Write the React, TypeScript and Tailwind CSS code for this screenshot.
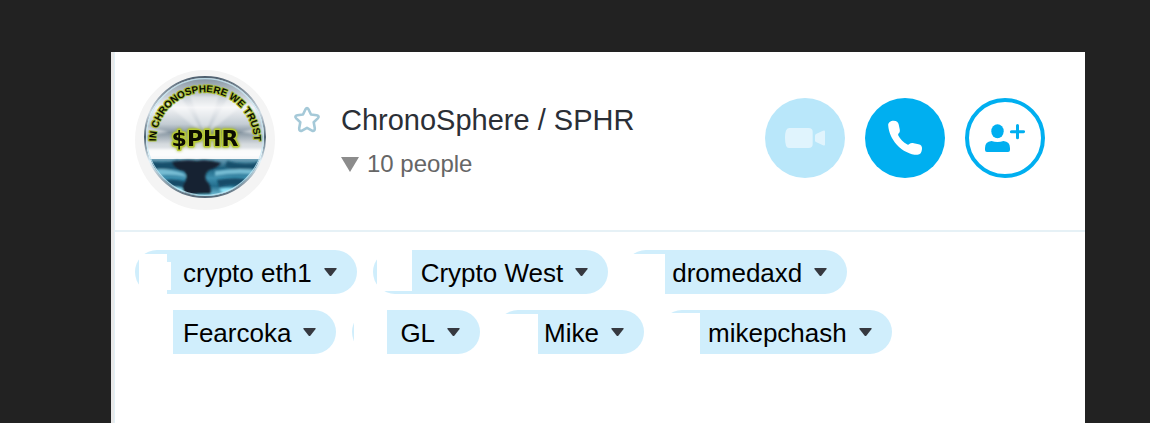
import { clsx } from 'clsx';

type Person = { name: string; masks: string[] };

// The masks blank out the profile picture at the left end of each chip
const people: Person[] = [
  { name: 'crypto eth1', masks: ['left-1 top-1 -bottom-px w-7', 'left-8 top-3 bottom-1 w-1'] },
  { name: 'Crypto West', masks: ['left-1 -top-px bottom-[3px] w-[35px]'] },
  { name: 'dromedaxd', masks: ['-left-px top-1 -bottom-px w-[42px]'] },
  { name: 'Fearcoka', masks: ['-left-px -top-px -bottom-px w-[39px]'] },
  { name: 'GL', masks: ['left-[2px] -top-px -bottom-px w-[33px]'] },
  { name: 'Mike', masks: ['-left-px top-1 -bottom-px w-[43px]'] },
  { name: 'mikepchash', masks: ['-left-px top-[3px] -bottom-px w-[41px]'] },
];

export default function App() {
  return (
    <div className="flex min-h-screen bg-[#222222] pl-[111px] pr-[65px] pt-[52px] font-['Liberation_Sans',Arial,sans-serif]">
      <div className="flex-1 min-w-0 border-l-[3px] border-[#e9e9e9] bg-white">
        <main className="min-h-full border-l border-[#e2f0f6]">

          {/* --- CONVERSATION HEADER --- */}
          <header className="flex items-start border-b-2 border-[#e6f1f6] pl-5 pr-10 pt-[18px] pb-5">
            <Avatar />
            <button type="button" aria-label="Add to favourites" className="ml-[18px] mt-9 shrink-0">
              <StarIcon />
            </button>
            <div className="ml-5 pt-[30px] flex-1 min-w-0">
              <h1 className="text-[29px] leading-10 text-[#2b2f36]">ChronoSphere / SPHR</h1>
              <button type="button" className="mt-2 flex items-center gap-2 text-2xl leading-8 text-[#666666]">
                <svg width="18" height="16" viewBox="0 0 18 16" aria-hidden="true">
                  <path d="M0 1h18L9 16z" fill="#8c8c8c" />
                </svg>
                10 people
              </button>
            </div>
            <div className="flex shrink-0 gap-5 pt-7">
              <RoundButton label="Video call" className="bg-[#b9e7fa]" disabled>
                <VideoIcon />
              </RoundButton>
              <RoundButton label="Call" className="bg-[#00aff0]">
                <PhoneIcon />
              </RoundButton>
              <RoundButton label="Add people" className="border-4 border-[#00aff0] bg-white">
                <AddPersonIcon />
              </RoundButton>
            </div>
          </header>

          {/* --- PEOPLE --- */}
          <ul className="flex max-w-[840px] flex-wrap gap-4 px-5 pt-[18px]">
            {people.map((p) => (
              <li key={p.name}>
                <Chip {...p} />
              </li>
            ))}
          </ul>
        </main>
      </div>
    </div>
  );
}

function Chip({ name, masks }: Person) {
  return (
    <button type="button" className="relative flex h-11 items-center gap-3 rounded-full bg-[#d0eefc] pl-12 pr-5 text-[26px] leading-8 text-black">
      {masks.map((m) => (
        <span key={m} className={clsx('absolute bg-white', m)} />
      ))}
      <span className="pt-0.5">{name}</span>
      <svg width="13" height="8" viewBox="0 0 13 8" aria-hidden="true">
        <path d="M1 0h11q1.200 0 .6 1L7.500 7.400q-1 1-2 0L.4 1Q-.2 0 1 0z" fill="#363940" />
      </svg>
    </button>
  );
}

function RoundButton({ label, className, disabled = false, children }: { label: string, className: string, disabled?: boolean, children: React.ReactNode }) {
  return (
    <button type="button" aria-label={label} disabled={disabled} className={clsx('flex h-20 w-20 items-center justify-center rounded-full', className)}>
      {children}
    </button>
  );
}

function StarIcon() {
  return (
    <svg width="28" height="28" viewBox="0 0 28 28" fill="none" stroke="#a5c9d8" strokeWidth="2.6" strokeLinejoin="round" strokeLinecap="round">
      <path d="M12.400 3.500Q14 .8 15.600 3.500L18 8.500L23.700 9.300Q26.900 10.200 24.800 12.400L20.700 16.300L21.800 22.300Q22 25.600 19 24.700L14 21.800L9 24.700Q6 25.600 6.200 22.300L7.300 16.300L3.200 12.400Q1.100 10.200 4.300 9.300L10 8.500z" />
    </svg>
  );
}

function VideoIcon() {
  return (
    <svg width="40" height="20" viewBox="0 0 40 20" fill="#e0f4fd">
      <path d="M4 0H23.500Q27.700 0 27.700 4V16Q27.700 20 23.500 20H4Q0 20 0 10Q0 0 4 0z" />
      <path d="M30 7.500Q30 6.500 31 6L38 2.800Q40 2 40 3.600V16.400Q40 18 38 17.200L31 14Q30 13.500 30 12.500z" />
    </svg>
  );
}

function PhoneIcon() {
  return (
    <svg width="36" height="36" viewBox="0 0 36 36" fill="#fff">
      <path d="M1.200 5.200C1 2.800 3.600 .8 6.600 .8C9.600 .8 11.300 2.200 11.700 4.500L12.700 9.300C13.100 11.300 12.800 12.500 11.500 13.600C11 14.100 11 14.800 11.300 15.500C13 19 16.300 22.500 20.400 24.500C21.200 24.900 21.700 24.700 22.300 24.100C23.600 22.900 25 22.800 26.800 23.200L31.500 24.200C34 24.700 35.300 26.300 35 29C34.700 32.500 33.300 34.700 30.500 34.800C24 35 15.500 31 9.800 24.700C4.500 18.800 1.600 11.500 1.200 5.200z" />
    </svg>
  );
}

function AddPersonIcon() {
  return (
    <svg width="40" height="28" viewBox="0 0 40 28" fill="#00aff0">
      <ellipse cx="12.500" cy="7.200" rx="6.200" ry="7" />
      <path d="M6.500 17Q12.500 18.800 18.500 17Q25 17.500 25 24V26Q25 28 23 28H2Q0 28 0 26V24Q0 17.500 6.500 17z" />
      <path d="M32.500 1.600V13.800M26.400 7.700H38.600" stroke="#00aff0" strokeWidth="3" strokeLinecap="round" />
    </svg>
  );
}

function Avatar() {
  return (
    <svg width="140" height="140" viewBox="0 0 140 140" className="shrink-0" role="img" aria-label="ChronoSphere coin">
      <defs>
        <linearGradient id="sky" x1="0" y1="6" x2="0" y2="89" gradientUnits="userSpaceOnUse">
          <stop offset="0" stopColor="#7f8f9c" />
          <stop offset=".2" stopColor="#bac3cb" />
          <stop offset=".38" stopColor="#f2f3f5" />
          <stop offset=".58" stopColor="#c3ccd3" />
          <stop offset=".68" stopColor="#8796a2" />
          <stop offset=".82" stopColor="#d5dade" />
          <stop offset="1" stopColor="#f7f8fa" />
        </linearGradient>
        <linearGradient id="sea" x1="0" y1="88" x2="0" y2="128" gradientUnits="userSpaceOnUse">
          <stop offset="0" stopColor="#78a9bf" />
          <stop offset=".25" stopColor="#1d607e" />
          <stop offset=".5" stopColor="#3e8fae" />
          <stop offset=".7" stopColor="#236d8d" />
          <stop offset="1" stopColor="#8bd6ec" />
        </linearGradient>
        <linearGradient id="rim" x1="0" y1="6" x2="0" y2="128" gradientUnits="userSpaceOnUse">
          <stop offset="0" stopColor="#4c5d6c" />
          <stop offset=".3" stopColor="#cfdbe4" />
          <stop offset=".5" stopColor="#4c6070" />
          <stop offset=".7" stopColor="#e2f3fb" />
          <stop offset="1" stopColor="#526574" />
        </linearGradient>
        <filter id="soft" x="-20%" y="-20%" width="140%" height="140%">
          <feGaussianBlur stdDeviation="1.3" />
        </filter>
        <filter id="glow" x="-20%" y="-20%" width="140%" height="140%">
          <feDropShadow dx="0" dy="0" stdDeviation="1.6" floodColor="#9fb02c" />
        </filter>
        <clipPath id="disc">
          <circle cx="70" cy="67" r="59" />
        </clipPath>
        <path id="motto" d="M22 81A49 49 0 1 1 118 81" />
      </defs>
      <circle cx="70" cy="70" r="70" fill="#f4f4f4" />
      <circle cx="70" cy="67" r="60" fill="#fff" stroke="url(#rim)" strokeWidth="2" />
      <g clipPath="url(#disc)">
        <rect x="9" y="6" width="122" height="84" fill="url(#sky)" />
        <g filter="url(#soft)" fill="#fff">
          <path d="M70 66L32 34L46 27zM70 66L94 26L108 34z" opacity=".35" />
          <path d="M70 66L55 26H84z" opacity=".35" />
          <path d="M9 56L34 62L9 66zM131 56L106 62L131 66z" opacity=".5" />
          <path d="M9 79H131V87H9z" opacity=".8" />
        </g>
        <rect x="9" y="89" width="122" height="40" fill="url(#sea)" />
        <g filter="url(#soft)">
          <path d="M9 90Q28 95 43 90L48 98Q26 101 16 99zM92 91Q112 97 131 90V99Q108 104 90 97z" fill="#15506c" />
          <path d="M12 101Q28 96 48 103L52 107Q30 103 16 107zM80 101Q106 97 128 101L122 105Q102 102 80 106z" fill="#76bcd3" />
          <path d="M20 112Q36 107 52 112L46 117Q32 115 26 118zM82 110Q104 106 118 111L108 117Q98 113 84 117z" fill="#124c68" />
          <path d="M29 119Q44 114 56 123L50 128zM84 119Q98 116 108 120L91 127z" fill="#8fe4f8" />
          <path d="M37 92Q52 89 62 91Q72 89 86 93Q83 98 74 100Q69 104 71 110Q78 117 75 125L52 127Q44 118 50 112Q53 106 49 101Q39 100 37 92z" fill="#142433" />
          <path d="M40 128Q66 121 96 126L70 131z" fill="#58afc8" />
        </g>
        <circle cx="70" cy="67" r="58.500" fill="none" stroke="#c5e8f5" strokeWidth="1.500" opacity=".8" />
      </g>
      <text fontFamily="'Liberation Sans', Arial, sans-serif" fontWeight="700" fontSize="10" fill="#0b0d05" stroke="#a9bd35" strokeWidth="2" paintOrder="stroke" strokeLinejoin="round" textAnchor="middle">
        <textPath href="#motto" startOffset="50%">IN CHRONOSPHERE WE TRUST</textPath>
      </text>
      <text x="70" y="76" fontFamily="'DejaVu Sans', sans-serif" fontWeight="700" fontSize="22" textAnchor="middle" fill="#070903" stroke="#b8cb36" strokeWidth="3" paintOrder="stroke" strokeLinejoin="round" filter="url(#glow)">$PHR</text>
    </svg>
  );
}
